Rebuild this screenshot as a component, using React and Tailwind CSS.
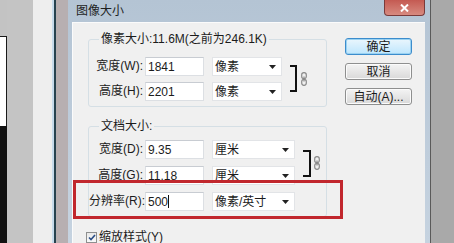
import React from "react";

function Arrow() {
  return (
    <svg width="7" height="4" viewBox="0 0 7 4" className="shrink-0">
      <path d="M0 0 H7 L3.5 4 Z" fill="#222" />
    </svg>
  );
}

function Chain() {
  return (
    <svg width="6" height="14" viewBox="0 0 6 14">
      <rect x="0.7" y="0.7" width="4.6" height="6" rx="2.2" fill="none" stroke="#8a8a8a" strokeWidth="1.2" />
      <rect x="0.7" y="7.3" width="4.6" height="6" rx="2.2" fill="none" stroke="#8a8a8a" strokeWidth="1.2" />
      <line x1="3" y1="4.5" x2="3" y2="9.5" stroke="#8a8a8a" strokeWidth="1.2" />
    </svg>
  );
}

function Row({ label, value, unit, selW, caret, gapTop }) {
  return (
    <div className={`flex items-center h-[19px] ${gapTop}`}>
      <div className="w-[54px] text-right text-[12px] leading-[19px] text-[#1b1b1b] whitespace-nowrap">{label}</div>
      <div className="ml-[2px] w-[59px] h-[19px] bg-white border border-[#dcdfe3] border-t-[#c8ccd2] flex items-center pl-[2px] text-[12px] text-[#1b1b1b]">
        {value}
        {caret && <span className="w-[1px] h-[13px] bg-[#111]" />}
      </div>
      <div className={`ml-[8px] ${selW} h-[19px] bg-white border border-[#e2e4e7] flex items-center justify-between pl-[2px] pr-[5px] text-[12px] text-[#1b1b1b]`}>
        <span>{unit}</span>
        <Arrow />
      </div>
    </div>
  );
}

function Button({ children, primary, cls }) {
  return (
    <div
      className={`w-[67px] h-[17px] rounded-[3px] flex items-center justify-center text-[12px] text-[#1b1b1b] ${
        primary
          ? "border border-[#3c8ccc] bg-gradient-to-b from-[#eaf6fd] to-[#bee6fd] shadow-[inset_0_0_0_1px_#9ad2f2]"
          : "border border-[#8e8f8f] bg-gradient-to-b from-[#f4f4f4] to-[#d9d9d9] shadow-[inset_0_0_0_1px_#fbfbfb]"
      } ${cls}`}
    >
      {children}
    </div>
  );
}

export default function App() {
  return (
    <div className="relative w-[454px] h-[243px] overflow-hidden flex bg-[#c2c2c2] font-['Liberation_Sans','Noto_Sans_CJK_SC',sans-serif]">
      {/* left background strips */}
      <div className="w-[33px] flex shrink-0">
        <div className="w-[7px] flex flex-col">
          <div className="h-[36px] bg-[#c3c3c3]" />
          <div className="h-[90px] bg-white border-t border-r border-[#1a1a1a]" />
          <div className="flex-1 bg-[#111]" />
        </div>
        <div className="flex-1 bg-[#c4c4c4]" />
      </div>
      <div className="w-[19px] shrink-0 bg-[#eeeeee]" />
      <div className="w-[2px] shrink-0 bg-[#c6dbeb]" />
      <div className="w-[2px] shrink-0 bg-[#26424f]" />
      <div className="w-[12px] shrink-0 bg-[#b7afb1]" />

      {/* dialog */}
      <div className="w-[362px] shrink-0 flex flex-col bg-gradient-to-b from-[#b4c4d4] to-[#c6d3e0]">
        <div className="h-[22px] flex items-start justify-between shrink-0">
          <div className="pl-[8px] pt-[3px] text-[12px] leading-[16px] text-[#1e1e1e]">图像大小</div>
          <div className="mr-[5px] w-[41px] h-[16px] rounded-b-[4px] border border-t-0 border-[#7a3a3a] bg-gradient-to-b from-[#c45a52] to-[#d78a80] flex items-center justify-center">
            <svg width="9" height="8" viewBox="0 0 9 8">
              <path d="M1 0.5 L8 7.5 M8 0.5 L1 7.5" stroke="#fff" strokeWidth="2" />
            </svg>
          </div>
        </div>
        <div className="flex-1 ml-[4px] mr-[5px] bg-[#f0f0f0] border-l border-t border-[#fbfbfb] flex pl-[15px]">
          <div className="flex flex-col w-[239px] pt-[8px]">
            <fieldset className="border border-[#d5dfe5] rounded-[3px] pb-[5px]">
              <legend className="ml-[10px] px-[2px] text-[12px] leading-[16px] text-[#1b1b1b]">像素大小:11.6M(之前为246.1K)</legend>
              <div className="flex mt-[10px]">
                <div className="flex flex-col w-[193px]">
                  <Row label="宽度(W):" value="1841" unit="像素" selW="w-[70px]" gapTop="" />
                  <Row label="高度(H):" value="2201" unit="像素" selW="w-[70px]" gapTop="mt-[6px]" />
                </div>
                <div className="ml-[8px] mt-[8px] w-[7px] h-[27px] border-t-2 border-r-2 border-b-2 border-[#111]" />
                <div className="ml-[4px] mt-[15px]">
                  <Chain />
                </div>
              </div>
            </fieldset>
            <fieldset className="mt-[11px] border border-[#d5dfe5] rounded-[3px] pb-[5px]">
              <legend className="ml-[10px] px-[2px] text-[12px] leading-[16px] text-[#1b1b1b]">文档大小:</legend>
              <div className="flex mt-[6px]">
                <div className="flex flex-col w-[206px]">
                  <Row label="宽度(D):" value="9.35" unit="厘米" selW="w-[83px]" gapTop="" />
                  <Row label="高度(G):" value="11.18" unit="厘米" selW="w-[83px]" gapTop="mt-[7px]" />
                  <Row label="分辨率(R):" value="500" unit="像素/英寸" selW="w-[83px]" gapTop="mt-[7px]" caret />
                </div>
                <div className="ml-[8px] mt-[10px] w-[8px] h-[27px] border-t-2 border-r-2 border-b-2 border-[#111]" />
                <div className="ml-[3px] mt-[16px]">
                  <Chain />
                </div>
              </div>
            </fieldset>
            <div className="mt-[13px] -ml-[2px] flex items-center gap-[2px]">
              <div className="w-[11px] h-[11px] border border-[#8e8f8f] bg-gradient-to-b from-[#e8e8e8] to-[#fafafa] flex items-center justify-center">
                <svg width="8" height="7" viewBox="0 0 8 7">
                  <path d="M1 3.5 L3 5.5 L7 1" stroke="#2a4d85" strokeWidth="1.6" fill="none" />
                </svg>
              </div>
              <span className="text-[12px] leading-[14px] text-[#1b1b1b]">缩放样式(Y)</span>
            </div>
          </div>
          <div className="ml-[18px] pt-[15px] flex flex-col">
            <Button primary>确定</Button>
            <Button cls="mt-[8px]">取消</Button>
            <Button cls="mt-[8px]">自动(A)...</Button>
          </div>
        </div>
      </div>

      <div className="w-[1px] shrink-0 bg-[#5a5a5a]" />
      <div className="flex-1 bg-[#a9a9a9]" />

      {/* red annotation box */}
      <div className="absolute left-[73px] top-[180px] w-[270px] h-[39px] border-[3px] border-[#c1272d]" />
    </div>
  );
}
